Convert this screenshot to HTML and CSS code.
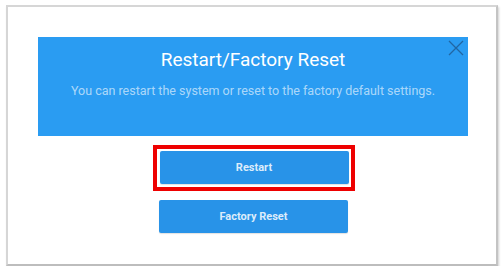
FILE: index.html
```html
<!DOCTYPE html>
<html>
<head>
<meta charset="utf-8">
<link rel="stylesheet" href="styles.css">
</head>
<body>
<div class="frame">
  <div class="panel">
    <button class="close" aria-label="Close">
      <svg width="16" height="16" viewBox="0 0 16 16"><path d="M1 1 L15 15 M15 1 L1 15" stroke="#2166a3" stroke-width="1.3" fill="none"/></svg>
    </button>
    <h1 class="title">Restart/Factory Reset</h1>
    <p class="subtitle">You can restart the system or reset to the factory default settings.</p>
  </div>
  <div class="actions">
    <div class="marker"><button class="btn">Restart</button></div>
    <button class="btn">Factory Reset</button>
  </div>
</div>
</body>
</html>
```

FILE: styles.css
```css
html, body {
  margin: 0;
  padding: 0;
  background: #ffffff;
}
body {
  font-family: Roboto, "Liberation Sans", sans-serif;
}
.frame {
  box-sizing: border-box;
  margin: 5px 6px 0 6px;
  width: 492px;
  height: 261px;
  background: #ffffff;
  border: 2px solid #d6d6d6;
  border-right-color: #c4c4c4;
  border-bottom-color: #bdbdbd;
  box-shadow: 1px 2px 2px rgba(0, 0, 0, 0.18);
  padding-top: 30px;
}
.panel {
  position: relative;
  box-sizing: border-box;
  width: 430px;
  height: 99px;
  margin: 0 0 0 30px;
  background: #2a9cf2;
  padding-top: 11px;
  text-align: center;
  color: #ffffff;
}
.close {
  position: absolute;
  top: 3px;
  right: 4px;
  padding: 0;
  border: 0;
  background: transparent;
  width: 16px;
  height: 16px;
  display: flex;
}
.title {
  margin: 0;
  font-size: 19px;
  line-height: 24px;
  font-weight: 400;
}
.subtitle {
  margin: 11px 0 0;
  font-size: 12.5px;
  line-height: 16px;
  color: rgba(255, 255, 255, 0.62);
}
.actions {
  display: flex;
  flex-direction: column;
  align-items: center;
  gap: 9px;
  margin-top: 9px;
  padding-left: 3px;
}
.marker {
  display: flex;
  border: 4px solid #ee0000;
  padding: 2px 2px 3px 3px;
}
.btn {
  width: 189px;
  height: 33px;
  border: 0;
  border-radius: 2px;
  background: #2893e8;
  color: #dcecfb;
  font-family: Roboto, "Liberation Sans", sans-serif;
  font-size: 11px;
  font-weight: 700;
  box-shadow: 0 1px 1px rgba(0, 0, 0, 0.12);
}
```
